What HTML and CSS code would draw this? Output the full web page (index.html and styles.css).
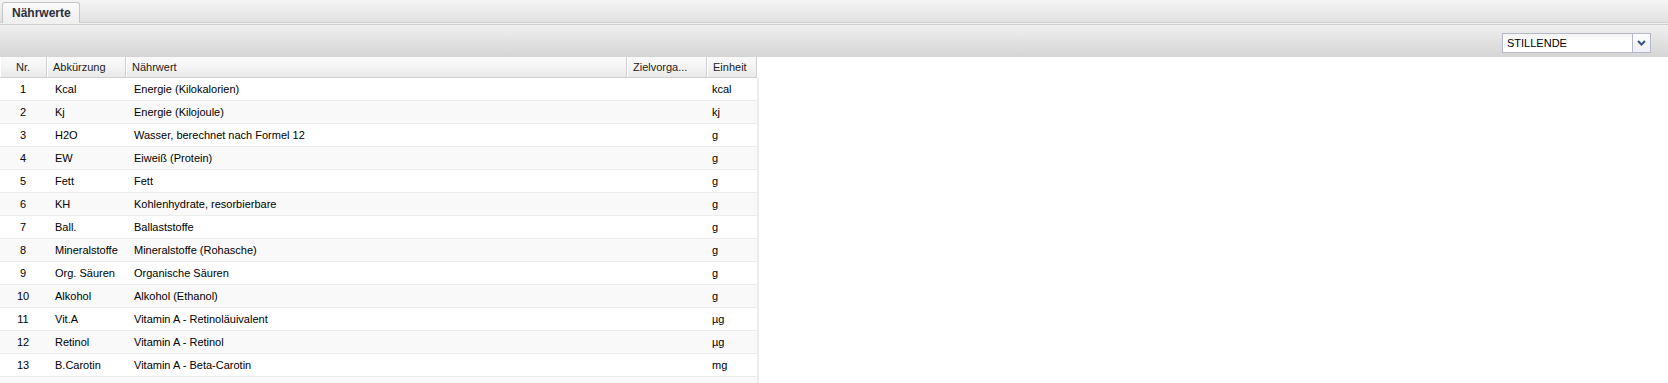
FILE: index.html
```html
<!DOCTYPE html>
<html lang="de">
<head>
<meta charset="utf-8">
<title>Nährwerte</title>
<link rel="stylesheet" href="styles.css">
</head>
<body>
<div class="tabbar">
  <div class="tab">Nährwerte</div>
</div>
<div class="tabstrip-bottom"></div>
<div class="toolbar">
  <div class="combo">
    <div class="combo-text">STILLENDE</div>
    <div class="combo-trigger">
      <svg width="9" height="6" viewBox="0 0 9 6"><path d="M1 1 L4.5 4.5 L8 1" fill="none" stroke="#3b5486" stroke-width="2"/></svg>
    </div>
  </div>
</div>
<div class="grid">
  <div class="hrow">
    <div class="hc c-nr center">Nr.</div>
    <div class="hc c-abk">Abkürzung</div>
    <div class="hc c-nw">Nährwert</div>
    <div class="hc c-ziel">Zielvorga...</div>
    <div class="hc c-einh">Einheit</div>
  </div>
  <div class="body">
    <div class="row"><div class="c c-nr center">1</div><div class="c c-abk">Kcal</div><div class="c c-nw">Energie (Kilokalorien)</div><div class="c c-ziel"></div><div class="c c-einh">kcal</div></div>
    <div class="row alt"><div class="c c-nr center">2</div><div class="c c-abk">Kj</div><div class="c c-nw">Energie (Kilojoule)</div><div class="c c-ziel"></div><div class="c c-einh">kj</div></div>
    <div class="row"><div class="c c-nr center">3</div><div class="c c-abk">H2O</div><div class="c c-nw">Wasser, berechnet nach Formel 12</div><div class="c c-ziel"></div><div class="c c-einh">g</div></div>
    <div class="row alt"><div class="c c-nr center">4</div><div class="c c-abk">EW</div><div class="c c-nw">Eiweiß (Protein)</div><div class="c c-ziel"></div><div class="c c-einh">g</div></div>
    <div class="row"><div class="c c-nr center">5</div><div class="c c-abk">Fett</div><div class="c c-nw">Fett</div><div class="c c-ziel"></div><div class="c c-einh">g</div></div>
    <div class="row alt"><div class="c c-nr center">6</div><div class="c c-abk">KH</div><div class="c c-nw">Kohlenhydrate, resorbierbare</div><div class="c c-ziel"></div><div class="c c-einh">g</div></div>
    <div class="row"><div class="c c-nr center">7</div><div class="c c-abk">Ball.</div><div class="c c-nw">Ballaststoffe</div><div class="c c-ziel"></div><div class="c c-einh">g</div></div>
    <div class="row alt"><div class="c c-nr center">8</div><div class="c c-abk">Mineralstoffe</div><div class="c c-nw">Mineralstoffe (Rohasche)</div><div class="c c-ziel"></div><div class="c c-einh">g</div></div>
    <div class="row"><div class="c c-nr center">9</div><div class="c c-abk">Org. Säuren</div><div class="c c-nw">Organische Säuren</div><div class="c c-ziel"></div><div class="c c-einh">g</div></div>
    <div class="row alt"><div class="c c-nr center">10</div><div class="c c-abk">Alkohol</div><div class="c c-nw">Alkohol (Ethanol)</div><div class="c c-ziel"></div><div class="c c-einh">g</div></div>
    <div class="row"><div class="c c-nr center">11</div><div class="c c-abk">Vit.A</div><div class="c c-nw">Vitamin A - Retinoläuivalent</div><div class="c c-ziel"></div><div class="c c-einh">µg</div></div>
    <div class="row alt"><div class="c c-nr center">12</div><div class="c c-abk">Retinol</div><div class="c c-nw">Vitamin A - Retinol</div><div class="c c-ziel"></div><div class="c c-einh">µg</div></div>
    <div class="row"><div class="c c-nr center">13</div><div class="c c-abk">B.Carotin</div><div class="c c-nw">Vitamin A - Beta-Carotin</div><div class="c c-ziel"></div><div class="c c-einh">mg</div></div>
    <div class="row alt"><div class="c c-nr center"></div><div class="c c-abk"></div><div class="c c-nw"></div><div class="c c-ziel"></div><div class="c c-einh"></div></div>
  </div>
</div>
</body>
</html>
```
FILE: styles.css
```css
html, body {
  margin: 0;
  padding: 0;
  background: #ffffff;
  font-family: "Liberation Sans", Arial, sans-serif;
  font-size: 11px;
  color: #000;
  overflow: hidden;
}

.tabbar {
  height: 22px;
  background: linear-gradient(#f4f4f4, #e1e1e1);
  display: flex;
  align-items: flex-end;
  padding-left: 2px;
  position: relative;
  z-index: 1;
}

.tab {
  height: 21px;
  margin-bottom: -1px;
  box-sizing: border-box;
  width: 78px;
  border: 1px solid #c6c6c6;
  border-bottom: none;
  border-radius: 3px 3px 0 0;
  background: linear-gradient(#fbfbfb, #f1f1f1 70%, #f0f0f0);
  font-weight: bold;
  font-size: 12px;
  color: #2a3040;
  padding-left: 9px;
  line-height: 21px;
}

.tabstrip-bottom {
  height: 1px;
  background: #f0f0f0;
  border-top: 1px solid #d0d0d0;
  border-bottom: 1px solid #d0d0d0;
}

.toolbar {
  height: 32px;
  box-sizing: border-box;
  background: linear-gradient(#efefef, #d5d5d5);
  display: flex;
  justify-content: flex-end;
  padding-top: 8px;
  padding-right: 17px;
}

.combo {
  width: 149px;
  height: 20px;
  box-sizing: border-box;
  display: flex;
  border: 1px solid #b5b8c8;
  background: #fff;
}

.combo-text {
  flex: 1;
  font-size: 11px;
  color: #000;
  padding-left: 4px;
  line-height: 18px;
  background: linear-gradient(#f3f3f3, #ffffff 40%);
}

.combo-trigger {
  width: 17px;
  border-left: 1px solid #b5b8c8;
  background: linear-gradient(#fdfdfd, #eef0f4);
  display: flex;
  align-items: center;
  justify-content: center;
}

.grid {
  width: 759px;
}

.hrow {
  display: flex;
  height: 21px;
  box-sizing: border-box;
  width: 757px;
  background: linear-gradient(#f9f9f9, #f4f4f4 50%, #e9e9e9);
  border-bottom: 1px solid #d0d0d0;
}

.hc {
  box-sizing: border-box;
  line-height: 20px;
  padding-left: 6px;
  color: #222;
  border-right: 1px solid #d0d0d0;
  box-shadow: inset 1px 0 0 #ffffff;
  white-space: nowrap;
  overflow: hidden;
}

.center {
  text-align: center;
  padding-left: 0;
}

.c-nr { width: 47px; }
.c-abk { width: 79px; }
.c-nw { width: 501px; }
.c-ziel { width: 80px; }
.c-einh { width: 50px; }

.body {
  width: 757px;
  border-right: 2px solid #ececec;
}

.row {
  display: flex;
  height: 23px;
  box-sizing: border-box;
  border-bottom: 1px solid #ededed;
  background: #ffffff;
}

.row.alt {
  background: #f9f9f9;
}

.c {
  box-sizing: border-box;
  line-height: 22px;
  padding-left: 8px;
  white-space: nowrap;
  overflow: hidden;
}

.c.center {
  padding-left: 0;
  padding-right: 1px;
}

.c.c-einh {
  padding-left: 5px;
}
```
